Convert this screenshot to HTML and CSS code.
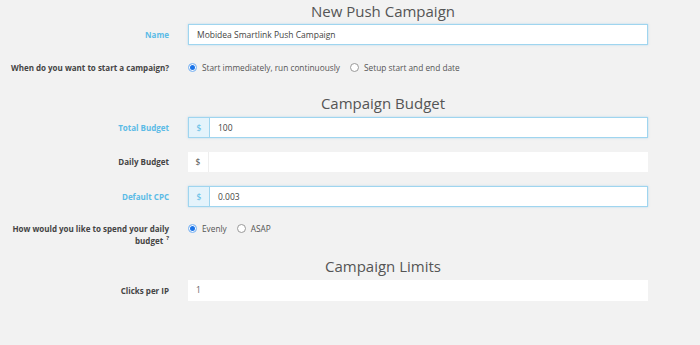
FILE: index.html
```html
<!DOCTYPE html>
<html lang="en">
<head>
  <meta charset="UTF-8" />
  <meta name="viewport" content="width=device-width, initial-scale=1.0" />
  <title>New Push Campaign</title>
  <link rel="stylesheet" href="styles.css">
</head>
<body>

  <div class="form">

    <!-- Campaign -->
    <h2 class="section-title title-main">New Push Campaign</h2>

    <div class="row">
      <label class="label active">Name</label>
      <div class="field">
        <div class="input focus">Mobidea Smartlink Push Campaign</div>
      </div>
    </div>

    <div class="row row-radio">
      <label class="label">When do you want to start a campaign?</label>
      <div class="field radios">
        <span class="radio"><span class="dot checked"></span>Start immediately, run continuously</span>
        <span class="radio"><span class="dot"></span>Setup start and end date</span>
      </div>
    </div>

    <!-- Budget -->
    <h2 class="section-title title-budget">Campaign Budget</h2>

    <div class="row">
      <label class="label active">Total Budget</label>
      <div class="field group focus">
        <span class="addon">$</span>
        <div class="input">100</div>
      </div>
    </div>

    <div class="row row-daily">
      <label class="label">Daily Budget</label>
      <div class="field group">
        <span class="addon">$</span>
        <div class="input"></div>
      </div>
    </div>

    <div class="row">
      <label class="label active">Default CPC</label>
      <div class="field group focus">
        <span class="addon">$</span>
        <div class="input">0.003</div>
      </div>
    </div>

    <div class="row row-spend">
      <label class="label">How would you like to spend your daily budget<sup>?</sup></label>
      <div class="field radios">
        <span class="radio"><span class="dot checked"></span>Evenly</span>
        <span class="radio"><span class="dot"></span>ASAP</span>
      </div>
    </div>

    <!-- Limits -->
    <h2 class="section-title title-limits">Campaign Limits</h2>

    <div class="row">
      <label class="label">Clicks per IP</label>
      <div class="field">
        <div class="input plain">1</div>
      </div>
    </div>

  </div>

</body>
</html>
```

FILE: styles.css
```css
body {
  margin: 0;
  padding: 0;
  background: #f2f2f2;
  font-family: "Open Sans", Arial, sans-serif;
  color: #555;
}

.form {
  width: 700px;
}

.section-title {
  font-weight: 400;
  font-size: 15px;
  line-height: 20px;
  color: #555;
  margin: 0;
  padding-left: 240px;
  width: 286px;
  text-align: center;
}

.title-main {
  padding-top: 1px;
  height: 23px;
}

.title-budget {
  margin-top: 16px;
  height: 24px;
}

.title-limits {
  margin-top: 9px;
  height: 24px;
}

.row {
  display: flex;
  align-items: center;
  margin-bottom: 13px;
}

.label {
  width: 169px;
  margin-right: 19px;
  text-align: right;
  font-size: 8px;
  font-weight: 700;
  color: #444;
  line-height: 12px;
}

.label.active {
  color: #5bbbe6;
}

.label sup {
  font-size: 6px;
  line-height: 0;
  vertical-align: 4px;
  margin-left: 3px;
}

.field {
  width: 460px;
  height: 21px;
  display: flex;
  box-sizing: border-box;
}

.input {
  flex: 1;
  height: 100%;
  box-sizing: border-box;
  background: #fff;
  font-size: 8.5px;
  line-height: 19px;
  padding-left: 8px;
  color: #444;
}

.input.focus,
.group.focus {
  border: 1px solid #9fd5ef;
  box-shadow: 0 0 2px rgba(120, 190, 230, 0.5);
}

.group .addon {
  width: 20px;
  text-align: center;
  font-size: 8.5px;
  line-height: 19px;
  background: #fff;
  color: #555;
  border-right: 1px solid #eee;
}

.group.focus .addon {
  background: #e4f3fb;
  color: #5bbbe6;
  border-right: 1px solid #9fd5ef;
}

.group {
  height: 20px;
}

.group.focus {
  height: 21px;
}

.input.plain {
  color: #666;
  line-height: 20px;
}

.row-radio {
  margin-bottom: 0;
  height: 19px;
}

.row-daily {
  margin-top: 14px;
  margin-bottom: 14px;
}

.row-spend {
  align-items: flex-start;
  margin-top: 16px;
  margin-bottom: 0;
}

.radios {
  height: auto;
  align-items: center;
  font-size: 8.3px;
  color: #555;
}

.radio {
  display: inline-flex;
  align-items: center;
  margin-right: 10px;
}

.dot {
  width: 7px;
  height: 7px;
  border: 1px solid #999;
  border-radius: 50%;
  background: #fff;
  margin-right: 5px;
}

.dot.checked {
  background: #1a73e8;
  border-color: #9cc8f5;
  box-shadow: inset 0 0 0 1px #fff;
}
```
